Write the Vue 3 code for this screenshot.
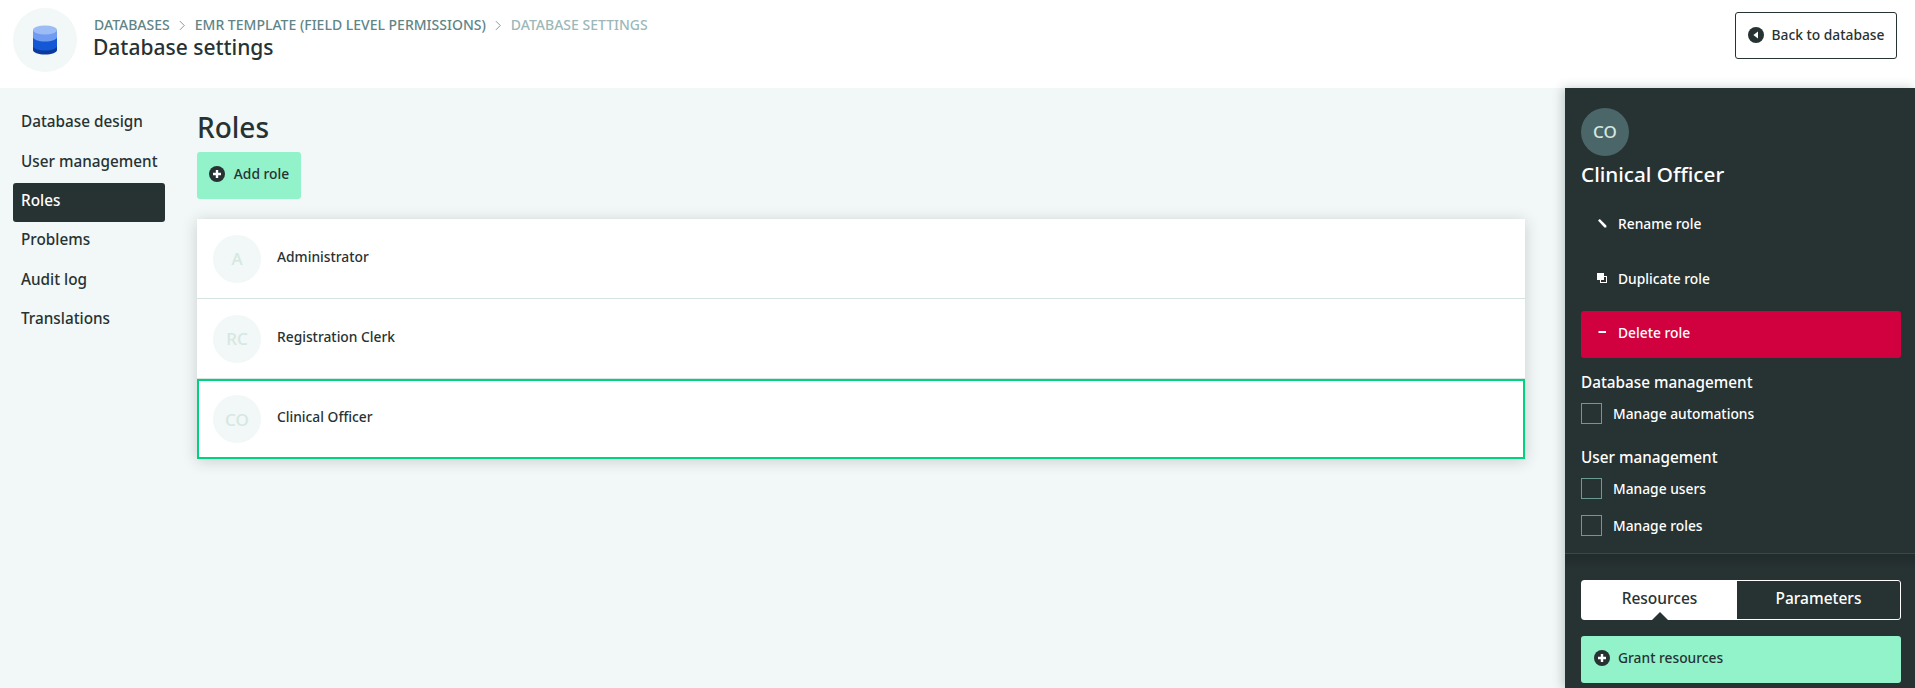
<template>
  <div class="page">
    <header class="topbar">
      <div class="logo">
        <svg viewBox="0 0 24 30" width="24" height="30">
          <path d="M0 20v5c0 2.6 5.4 4.6 12 4.6s12-2 12-4.6v-5z" fill="#0b3a9c" />
          <path d="M0 12v9c0 2.6 5.4 4.6 12 4.6s12-2 12-4.6v-9z" fill="#1558d6" />
          <path d="M0 5v7c0 2.6 5.4 4.6 12 4.6s12-2 12-4.6V5z" fill="#6f9bf0" />
          <ellipse cx="12" cy="5" rx="12" ry="4.6" fill="#9cbcf6" />
        </svg>
      </div>
      <div class="heading">
        <nav class="crumbs">
          <span>Databases</span>
          <svg class="chev" viewBox="0 0 8 12" width="7" height="11"><path d="M1 1l5 5-5 5" fill="none" stroke="#6b8e8e" stroke-width="1" /></svg>
          <span>EMR template (Field level permissions)</span>
          <svg class="chev" viewBox="0 0 8 12" width="7" height="11"><path d="M1 1l5 5-5 5" fill="none" stroke="#6b8e8e" stroke-width="1" /></svg>
          <span class="current">Database settings</span>
        </nav>
        <h1 class="page-title">Database settings</h1>
      </div>
      <button class="back-btn">
        <svg viewBox="0 0 16 16" width="16" height="16">
          <circle cx="8" cy="8" r="8" fill="#273233" />
          <path d="M10 4.6v6.8L5.4 8z" fill="#fff" />
        </svg>
        Back to database
      </button>
    </header>

    <div class="body">
      <aside class="side">
        <a v-for="item in navItems" :key="item" class="nav-item" :class="{ active: item === 'Roles' }">{{ item }}</a>
      </aside>

      <main class="main">
        <h2 class="roles-title">Roles</h2>
        <button class="add-btn">
          <svg viewBox="0 0 16 16" width="16" height="16">
            <circle cx="8" cy="8" r="8" fill="#273233" />
            <path d="M8 4v8M4 8h8" stroke="#fff" stroke-width="2.4" />
          </svg>
          Add role
        </button>
        <div class="role-list">
          <div v-for="role in roles" :key="role.name" class="role-row" :class="{ selected: role.selected }">
            <span class="avatar">{{ role.short }}</span>
            <span class="role-name">{{ role.name }}</span>
          </div>
        </div>
      </main>

      <aside class="panel">
        <div class="panel-top">
          <span class="panel-avatar">CO</span>
          <h3 class="panel-title">Clinical Officer</h3>
          <div class="actions">
            <a class="action">
              <svg viewBox="0 0 10 10" width="10" height="10"><path d="M1 2.6L2.8 1 9.4 7.4V9.4H7.4z" fill="#fff" /></svg>
              Rename role
            </a>
            <a class="action">
              <svg viewBox="0 0 10 10" width="10" height="10">
                <rect x="3.5" y="3.5" width="6" height="6" fill="none" stroke="#fff" />
                <rect x="0" y="0" width="7" height="7" fill="#fff" />
              </svg>
              Duplicate role
            </a>
            <a class="action danger">
              <svg viewBox="0 0 10 10" width="10" height="10"><rect x="1.5" y="4" width="7.5" height="2" fill="#fff" /></svg>
              Delete role
            </a>
          </div>
          <div v-for="group in permissions" :key="group.title" class="perm-group">
            <h4 class="perm-title">{{ group.title }}</h4>
            <label v-for="perm in group.items" :key="perm" class="perm">
              <span class="check"></span>
              {{ perm }}
            </label>
          </div>
        </div>
        <div class="panel-bottom">
          <div class="tabs">
            <div class="tab on">Resources</div>
            <div class="tab">Parameters</div>
          </div>
          <button class="grant-btn">
            <svg viewBox="0 0 16 16" width="16" height="16">
              <circle cx="8" cy="8" r="8" fill="#273233" />
              <path d="M8 4v8M4 8h8" stroke="#fff" stroke-width="2.4" />
            </svg>
            Grant resources
          </button>
        </div>
      </aside>
    </div>
  </div>
</template>

<script setup>
const navItems = ['Database design', 'User management', 'Roles', 'Problems', 'Audit log', 'Translations']

const roles = [
  { short: 'A', name: 'Administrator' },
  { short: 'RC', name: 'Registration Clerk' },
  { short: 'CO', name: 'Clinical Officer', selected: true }
]

const permissions = [
  { title: 'Database management', items: ['Manage automations'] },
  { title: 'User management', items: ['Manage users', 'Manage roles'] }
]
</script>

<style>
html, body {
  margin: 0;
  overflow: hidden;
}
</style>

<style scoped>
.page {
  width: 1915px;
  height: 688px;
  display: flex;
  flex-direction: column;
  overflow: hidden;
  font-family: "Noto Sans", "Open Sans", sans-serif;
  color: #273233;
  background: #f2f7f7;
}

/* top bar */
.topbar {
  height: 88px;
  flex: none;
  display: flex;
  align-items: flex-start;
  padding: 8px 18px 0 13px;
  background: #fff;
  box-sizing: border-box;
}

.logo {
  width: 64px;
  height: 64px;
  border-radius: 50%;
  background: #f2f7f7;
  display: flex;
  align-items: center;
  justify-content: center;
  flex: none;
}

.heading {
  margin: 8px 0 0 17px;
  flex: 1;
}

.crumbs {
  display: flex;
  align-items: center;
  gap: 9px;
  font-size: 14px;
  font-weight: 500;
  line-height: 18px;
  text-transform: uppercase;
  color: #5f8587;
}

.crumbs .current {
  color: #9cb8b8;
}

.page-title {
  margin: 0 0 0 -1px;
  font-size: 21px;
  font-weight: 500;
  line-height: 26px;
}

.back-btn {
  width: 162px;
  height: 47px;
  margin-top: 4px;
  display: flex;
  align-items: center;
  justify-content: center;
  gap: 8px;
  padding: 0 0 2px;
  background: #fff;
  border: 1px solid #273233;
  border-radius: 3px;
  font: 500 13.8px "Noto Sans", sans-serif;
  color: #273233;
}

/* layout */
.body {
  flex: 1;
  display: flex;
  min-height: 0;
}

.side {
  width: 152px;
  margin-left: 13px;
  padding-top: 16px;
  flex: none;
  display: flex;
  flex-direction: column;
}

.nav-item {
  height: 39.4px;
  box-sizing: border-box;
  display: flex;
  align-items: center;
  padding: 0 0 5px 8px;
  border-radius: 3px;
  font-size: 15.3px;
  font-weight: 500;
}

.nav-item.active {
  background: #273233;
  color: #fff;
}

.main {
  width: 1328px;
  margin-left: 32px;
  flex: none;
}

.roles-title {
  margin: 21px 0 0;
  font-size: 28px;
  font-weight: 500;
  line-height: 36px;
}

.add-btn {
  width: 104px;
  height: 47px;
  margin-top: 7px;
  display: flex;
  align-items: center;
  justify-content: center;
  gap: 9px;
  padding: 0 0 4px;
  background: #92f2ca;
  border: none;
  border-radius: 3px;
  font: 500 13.8px "Noto Sans", sans-serif;
  color: #273233;
}

.role-list {
  margin-top: 20px;
  background: #fff;
  box-shadow: 0 2px 14px rgba(39, 50, 51, 0.2);
}

.role-row {
  height: 80px;
  box-sizing: border-box;
  display: flex;
  align-items: center;
  padding-left: 16px;
  border-bottom: 1px solid #d5e3e3;
}

.role-row.selected {
  border: 2px solid #00d27f;
  padding-left: 14px;
}

.avatar {
  width: 48px;
  height: 48px;
  border-radius: 50%;
  background: #f2f7f7;
  display: flex;
  align-items: center;
  justify-content: center;
  font-size: 17px;
  font-weight: 500;
  color: #d5e8e0;
}

.role-name {
  margin-left: 16px;
  margin-top: -5px;
  font-size: 13.8px;
  font-weight: 500;
}

/* right panel */
.panel {
  width: 350px;
  margin-left: 40px;
  flex: none;
  display: flex;
  flex-direction: column;
  background: #273233;
  color: #fff;
  box-shadow: -2px 0 10px rgba(39, 50, 51, 0.25);
}

.panel-top {
  padding: 20px 14px 0 16px;
  height: 466px;
  box-sizing: border-box;
  border-bottom: 1px solid #3a4849;
}

.panel-avatar {
  width: 48px;
  height: 48px;
  padding-bottom: 2px;
  box-sizing: border-box;
  border-radius: 50%;
  background: #4a6668;
  display: flex;
  align-items: center;
  justify-content: center;
  font-size: 17px;
  font-weight: 500;
  color: #d5e8e0;
}

.panel-title {
  margin: 4px 0 0;
  font-size: 20.7px;
  font-weight: 500;
  line-height: 28px;
}

.actions {
  margin-top: 16px;
  display: flex;
  flex-direction: column;
  gap: 8px;
}

.action {
  height: 47px;
  box-sizing: border-box;
  display: flex;
  align-items: center;
  gap: 11px;
  padding: 0 0 9px 16px;
  border-radius: 3px;
  font-size: 13.8px;
  font-weight: 500;
}

.action.danger {
  padding-bottom: 5px;
  background: #d1003f;
  margin-top: -3px;
}

.perm-group {
  margin-top: 14px;
}

.perm-group + .perm-group {
  margin-top: 23px;
}

.perm-title {
  margin: 0;
  font-size: 15.3px;
  font-weight: 500;
  line-height: 20px;
}

.perm {
  height: 21px;
  display: flex;
  align-items: center;
  gap: 11px;
  margin: 11px 0 16px;
  font-size: 13.8px;
  font-weight: 500;
}

.check {
  width: 19px;
  height: 19px;
  border: 1px solid #6b9a94;
}

.panel-bottom {
  flex: 1;
  padding: 26px 14px 0 16px;
  background: linear-gradient(#212b2c, #273233 16px);
}

.tabs {
  height: 40px;
  display: flex;
  border: 1px solid #fff;
  border-radius: 3px;
  box-sizing: border-box;
}

.tab {
  flex: 1;
  display: flex;
  align-items: center;
  justify-content: center;
  padding-bottom: 5px;
  font-size: 15.5px;
  font-weight: 500;
  position: relative;
}

.tab.on {
  flex: none;
  width: 155px;
  background: #fff;
  color: #273233;
}

.tab.on::after {
  content: "";
  position: absolute;
  bottom: -1px;
  left: 50%;
  margin-left: -8px;
  border: 8px solid transparent;
  border-top: 0;
  border-bottom-color: #273233;
}

.grant-btn {
  width: 320px;
  height: 47px;
  margin-top: 16px;
  display: flex;
  align-items: center;
  gap: 8px;
  padding: 0 0 4px 13px;
  background: #92f2ca;
  border: none;
  border-radius: 3px;
  font: 500 13.8px "Noto Sans", sans-serif;
  color: #273233;
}
</style>
